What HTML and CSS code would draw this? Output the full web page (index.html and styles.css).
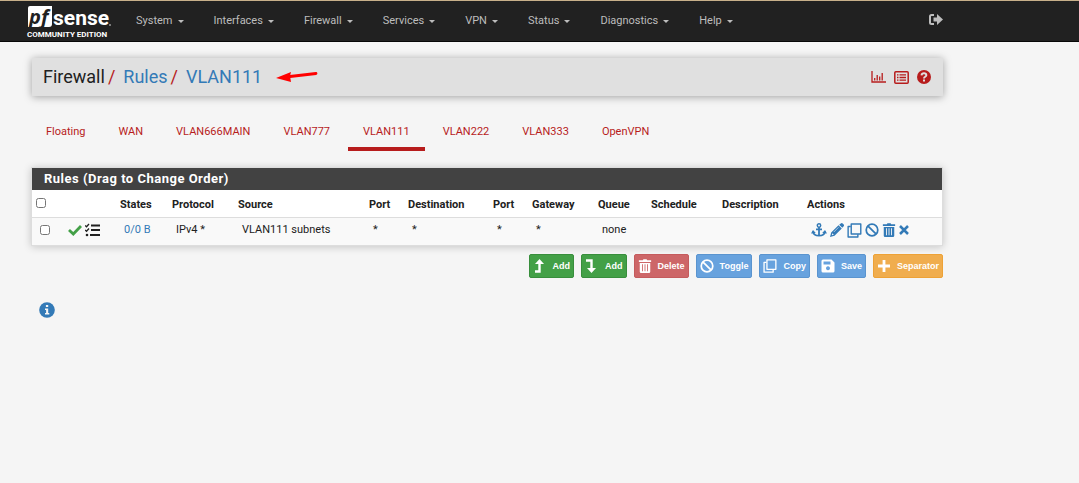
FILE: index.html
```
<!DOCTYPE html>
<html lang="en">
<head>
<meta charset="utf-8">
<title>Firewall: Rules: VLAN111</title>
<link rel="stylesheet" href="styles.css">
</head>
<body>
<svg class="sprite" aria-hidden="true">
  <symbol id="ban" viewBox="0 0 16 16"><circle cx="8" cy="8" r="6.6" fill="none" stroke="currentColor" stroke-width="2"/><path d="M3.5 3.5l9 9" stroke="currentColor" stroke-width="2"/></symbol>
  <symbol id="copy" viewBox="0 0 16 16"><path d="M4.500 1h10.200v10.800H4.500z" fill="none" stroke="currentColor" stroke-width="1.500" stroke-linejoin="round"/><path d="M4 3.800H1.200v11.200h10.400v-3" fill="none" stroke="currentColor" stroke-width="1.500" stroke-linejoin="round"/></symbol>
  <symbol id="trash" viewBox="0 0 16 16"><path fill="currentColor" fill-rule="evenodd" d="M1 1.500h4.500L6.200.3h3.600l.7 1.200H15v2H1zM2 4.500h12V14.500q0 1.500-1.500 1.500h-9Q2 16 2 14.500zM4.600 6v8h1V6zM7.500 6v8h1V6zM10.400 6v8h1V6z"/></symbol>
</svg>
<header class="navbar">
  <a class="brand" href="#" aria-label="pfSense Community Edition">
    <svg width="86" height="40" viewBox="0 0 86 40">
      <path d="M3 5h22v18q0 3-3 3H1V7q0-2 2-2z" fill="#fff"/>
      <text class="logo-pf" x="2" y="23">pf</text>
      <text class="logo-sense" x="26" y="24">sense</text>
      <circle cx="83" cy="24" r="1" fill="#999"/>
      <text class="logo-edition" x="0" y="36">COMMUNITY EDITION</text>
    </svg>
  </a>
  <nav class="menu">
    <a href="#">System<i class="caret"></i></a>
    <a href="#">Interfaces<i class="caret"></i></a>
    <a href="#">Firewall<i class="caret"></i></a>
    <a href="#">Services<i class="caret"></i></a>
    <a href="#">VPN<i class="caret"></i></a>
    <a href="#">Status<i class="caret"></i></a>
    <a href="#">Diagnostics<i class="caret"></i></a>
    <a href="#">Help<i class="caret"></i></a>
  </nav>
  <a class="logout" href="#" aria-label="Log out"><svg width="14" height="14" viewBox="0 0 14 14"><path d="M5 1H2.500Q1 1 1 2.500v6Q1 10 2.500 10H5" fill="none" stroke="currentColor" stroke-width="2"/><path d="M4.500 3.500H8V0l6 5.500L8 11V7.500H4.500z" fill="currentColor"/></svg></a>
</header>
<main class="page">
  <div class="titlebar">
    <h1 class="crumbs">
      <span>Firewall</span><span class="slash">/</span><a href="#">Rules</a><span class="slash">/</span><a href="#">VLAN111</a>
      <svg class="arrow" width="42" height="12" viewBox="0 0 42 12"><path d="M14 5.500L40 2.500" stroke="#f00" stroke-width="2.800" stroke-linecap="round"/><path d="M0 7L15 1l-1 4 1 6z" fill="#f00"/></svg>
    </h1>
    <div class="tools">
      <a href="#" aria-label="Status graph"><svg width="15" height="12" viewBox="0 0 15 12"><path d="M1 0v11h14" fill="none" stroke="currentColor" stroke-width="1.300"/><path d="M3.700 7v2.500M6.200 4v5.500M8.700 5.500v4M11.200 2v7.500" stroke="currentColor" stroke-width="1.300"/></svg></a>
      <a href="#" aria-label="Log entries"><svg width="15" height="13" viewBox="0 0 15 13"><rect x=".8" y=".8" width="13.400" height="11.400" rx="1" fill="none" stroke="currentColor" stroke-width="1.500"/><path d="M3 3.800h1.500M3 6.500h1.500M3 9.200h1.500M5.500 3.800H12M5.500 6.500H12M5.500 9.200H12" stroke="currentColor" stroke-width="1.300"/></svg></a>
      <a href="#" aria-label="Help"><svg width="14" height="14" viewBox="0 0 14 14"><circle cx="7" cy="7" r="7" fill="currentColor"/><path d="M4.500 5.300Q4.800 3.300 7 3.300T9.400 5.300Q9.400 6.200 8 6.900Q7 7.300 7 8.500" fill="none" stroke="#e0e0e0" stroke-width="1.900"/><path d="M6 9.500h2v1.900H6z" fill="#e0e0e0"/></svg></a>
    </div>
  </div>
  <nav class="tabs">
    <a href="#">Floating</a>
    <a href="#">WAN</a>
    <a href="#">VLAN666MAIN</a>
    <a href="#">VLAN777</a>
    <a href="#" class="active" aria-current="page">VLAN111</a>
    <a href="#">VLAN222</a>
    <a href="#">VLAN333</a>
    <a href="#">OpenVPN</a>
  </nav>
  <section class="panel">
    <h2>Rules (Drag to Change Order)</h2>
    <table>
      <colgroup><col class="c-check"><col class="c-flags"><col class="c-states"><col class="c-proto"><col class="c-source"><col class="c-port"><col class="c-dest"><col class="c-port"><col class="c-gate"><col class="c-queue"><col class="c-sched"><col class="c-dest"><col></colgroup>
      <thead>
        <tr><th><input type="checkbox" aria-label="Select all rules"></th><th></th><th>States</th><th>Protocol</th><th>Source</th><th>Port</th><th>Destination</th><th>Port</th><th>Gateway</th><th>Queue</th><th>Schedule</th><th>Description</th><th>Actions</th></tr>
      </thead>
      <tbody>
        <tr>
          <td><input type="checkbox" aria-label="Select rule"></td>
          <td><div class="icons flags">
            <svg width="14" height="14" viewBox="0 0 14 14"><path d="M1 7l4.300 4L13 3" fill="none" stroke="#43a047" stroke-width="2.800"/></svg>
            <svg width="15" height="14" viewBox="0 0 15 14"><path d="M0 2.500l1.500 1.300L4 1M0 7l1.500 1.300L4 5.500" fill="none" stroke="#212121" stroke-width="1.300"/><circle cx="2" cy="12" r="1.300" fill="#212121"/><path d="M6 2.500h9M6 7h9M5 12h10" stroke="#212121" stroke-width="1.800"/></svg>
          </div></td>
          <td><a href="#">0/0 B</a></td><td>IPv4 *</td><td>VLAN111 subnets</td><td>*</td><td>*</td><td>*</td><td>*</td><td>none</td><td></td><td></td>
          <td><div class="icons">
            <a href="#" aria-label="Anchor"><svg width="16" height="14" viewBox="0 0 16 14"><circle cx="8" cy="2.500" r="1.700" fill="none" stroke="currentColor" stroke-width="1.500"/><path d="M8 4v9M5 6.300h6M2 8.500Q2.500 12.700 8 12.700T14 8.500" fill="none" stroke="currentColor" stroke-width="1.800"/><path d="M0 10.500L2 7l2.800 3zM16 10.500L14 7l-2.800 3z" fill="currentColor"/></svg></a>
            <a href="#" aria-label="Edit"><svg width="14" height="14" viewBox="0 0 14 14"><path d="M9.200 1.800L10.800.4q1-.7 1.900 0L13.700 1.400q.7.900 0 1.800L12.300 4.700zM8.500 2.300l3.300 3.300L4.500 12.800 0 14l1.200-4.500zM2.300 10.200L1.800 12.300l2-.6z" fill="currentColor" fill-rule="evenodd"/><path d="M3.800 9l4.700-4.700" stroke="#f9f9f9" stroke-width=".6"/></svg></a>
            <a href="#" aria-label="Copy"><svg width="15" height="15"><use href="#copy"/></svg></a>
            <a href="#" aria-label="Disable"><svg width="14" height="14"><use href="#ban"/></svg></a>
            <a href="#" aria-label="Delete"><svg width="14" height="14"><use href="#trash"/></svg></a>
            <a href="#" aria-label="Clear states"><svg width="10" height="10" viewBox="0 0 10 10"><path d="M1 1l8 8M9 1L1 9" stroke="currentColor" stroke-width="2.500"/></svg></a>
          </div></td>
        </tr>
      </tbody>
    </table>
  </section>
  <div class="buttons">
    <button class="green"><svg width="14" height="14" viewBox="0 0 14 14"><path d="M2 12.500h4.500V3" fill="none" stroke="currentColor" stroke-width="2.400"/><path d="M2 5L6.500 0 11 5z" fill="currentColor"/></svg><span>Add</span></button>
    <button class="green"><svg width="14" height="14" viewBox="0 0 14 14"><path d="M1 1.500h5.500V11" fill="none" stroke="currentColor" stroke-width="2.400"/><path d="M2 9l4.500 5L11 9z" fill="currentColor"/></svg><span>Add</span></button>
    <button class="red"><svg width="14" height="14"><use href="#trash"/></svg><span>Delete</span></button>
    <button class="blue"><svg width="14" height="14"><use href="#ban"/></svg><span>Toggle</span></button>
    <button class="blue"><svg width="14" height="14"><use href="#copy"/></svg><span>Copy</span></button>
    <button class="blue"><svg width="14" height="14" viewBox="0 0 14 14"><path d="M2 .5h8.500l3 3V12q0 1.500-1.500 1.500H2Q.5 13.500.5 12V2Q.5.500 2 .5zM2.500 2.500v3h7v-3zM7 7.300a2 2 0 1 0 .01 0z" fill="currentColor" fill-rule="evenodd"/></svg><span>Save</span></button>
    <button class="orange"><svg width="14" height="14" viewBox="0 0 14 14"><path d="M7 1v12M1 7h12" stroke="currentColor" stroke-width="2.800"/></svg><span>Separator</span></button>
  </div>
  <a class="info" href="#" aria-label="Information"><svg width="16" height="16" viewBox="0 0 16 16"><circle cx="8" cy="8" r="7.800" fill="currentColor"/><path d="M6.900 3h2.300v2H6.900zM6 6.500h3.200v4.500h1.100v1.500H6v-1.500h1.100V8H6z" fill="#f5f5f5"/></svg></a>
</main>
</body>
</html>
```
FILE: styles.css
```
* { box-sizing: border-box; }
body {
  margin: 0;
  background: #f5f5f5;
  color: #212121;
  font: 11px/16px Roboto, "Liberation Sans", sans-serif;
}
a { color: #337ab7; text-decoration: none; }
svg { display: block; flex: none; }
.sprite { position: absolute; width: 0; height: 0; }

.navbar {
  display: flex;
  align-items: center;
  height: 42px;
  padding: 0 136px 0 27px;
  background: #212121;
  border-top: 1px solid #c8b08a;
  border-bottom: 1px solid #080808;
}
.brand { margin-right: 23px; }
.brand svg { overflow: visible; }
.logo-pf { font: italic bold 20px "Open Sans", sans-serif; fill: #212121; }
.logo-sense { font: bold 21px Roboto, sans-serif; fill: #fff; }
.logo-edition { font: bold 8px Roboto, sans-serif; fill: #fff; }
.menu { display: flex; flex: 1; gap: 30px; }
.menu a { display: flex; align-items: center; gap: 5px; color: #bdbdbd; }
.caret {
  border-top: 3px solid currentColor;
  border-left: 3px solid transparent;
  border-right: 3px solid transparent;
}
.logout { color: #bdbdbd; }

.page { padding: 16px 136px 0 32px; }
.titlebar {
  display: flex;
  align-items: center;
  justify-content: space-between;
  height: 38px;
  padding: 0 12px 0 11px;
  background: #e0e0e0;
  box-shadow: 0 1px 8px rgba(0, 0, 0, 0.35);
}
.crumbs {
  display: flex;
  align-items: center;
  margin: 0;
  font-size: 18px;
  font-weight: 400;
  line-height: 24px;
}
.slash { margin: 0 8px 0 3px; color: #b71c1c; }
.arrow { margin-left: 14px; }
.tools { display: flex; align-items: center; gap: 8px; }
.tools a { color: #b71c1c; }

.tabs { display: flex; gap: 3px; margin: 19px 0 0 -1px; }
.tabs a {
  padding: 9px 15px 7px;
  border-bottom: 4px solid transparent;
  color: #b71c1c;
}
.tabs .active { border-color: #b71c1c; }

.panel {
  margin: 16px 0 0 -1px;
  background: #fff;
  border: 1px solid #ddd;
  box-shadow: 0 1px 8px rgba(0, 0, 0, 0.2);
}
.panel h2 {
  margin: 0;
  padding: 0 12px;
  background: #424242;
  color: #fff;
  font-size: 13px;
  line-height: 22px;
  letter-spacing: 0.5px;
}
table { width: 100%; table-layout: fixed; border-collapse: collapse; }
th, td { text-align: left; white-space: nowrap; }
th { height: 27px; padding: 4px 4px 0; font-weight: 700; }
td { height: 28px; padding: 0 8px 2px; background: #f9f9f9; border-top: 1px solid #ddd; }
th input, td input { display: block; width: 10px; height: 10px; margin: 0; }
th input { margin-bottom: 5px; }
.c-check { width: 28px; }
.c-flags { width: 56px; }
.c-states { width: 52px; }
.c-proto { width: 66px; }
.c-source { width: 131px; }
.c-port { width: 39px; }
.c-dest { width: 85px; }
.c-gate { width: 66px; }
.c-queue { width: 53px; }
.c-sched { width: 71px; }
.icons { display: flex; align-items: center; gap: 3px; }

.buttons { display: flex; justify-content: flex-end; gap: 7px; margin-top: 8px; }
button {
  display: flex;
  align-items: center;
  gap: 6px;
  height: 24px;
  padding: 0 3px;
  border: 1px solid;
  border-radius: 2px;
  color: #fff;
  font: 700 9px "Liberation Sans", sans-serif;
}
.green { background: #43a047; border-color: #388e3c; }
.red { background: #cd6668; border-color: #c55b5d; }
.blue { background: #67a2de; border-color: #5a94cf; }
.orange { background: #f0ad4e; border-color: #eea236; }
.info { display: inline-block; margin: 24px 0 0 7px; }
```
